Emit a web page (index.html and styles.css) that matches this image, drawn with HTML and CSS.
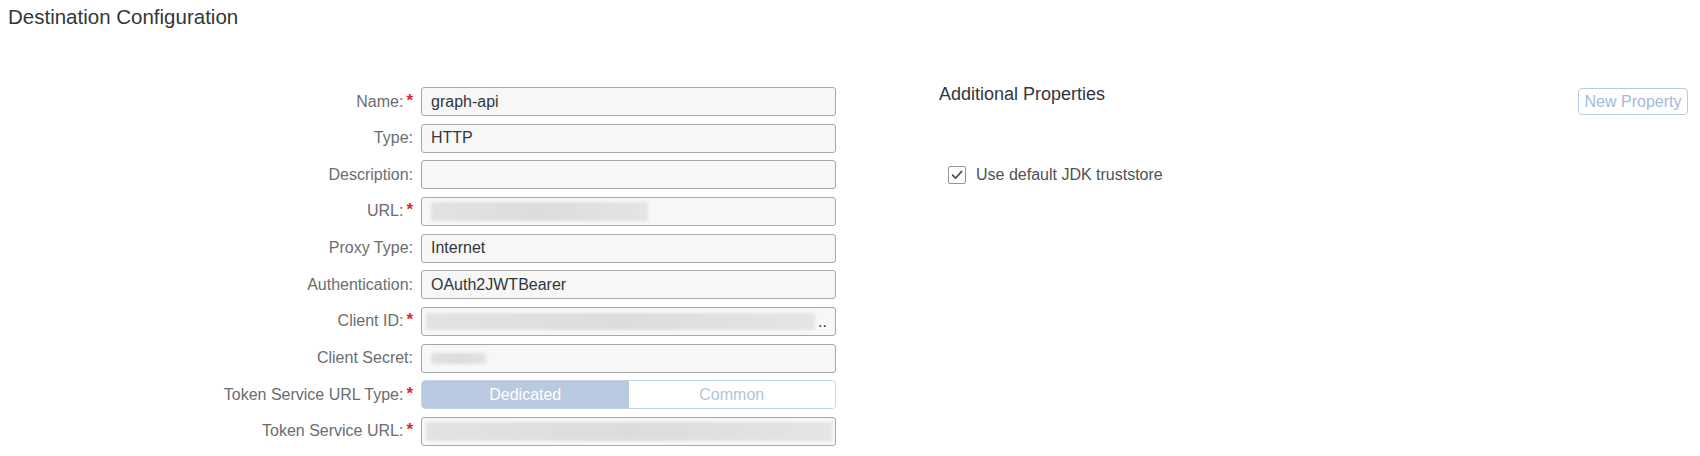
FILE: index.html
```html
<!DOCTYPE html>
<html>
<head>
<meta charset="utf-8">
<link rel="stylesheet" href="styles.css">
</head>
<body>
<div class="page">
  <h1 class="title">Destination Configuration</h1>
  <div class="content">
    <div class="form">
      <div class="label">Name:<span class="req">*</span></div>
      <div class="field"><span class="val">graph-api</span></div>

      <div class="label">Type:</div>
      <div class="field"><span class="val">HTTP</span></div>

      <div class="label">Description:</div>
      <div class="field"></div>

      <div class="label">URL:<span class="req">*</span></div>
      <div class="field"><span class="blur blur-url"></span></div>

      <div class="label">Proxy Type:</div>
      <div class="field"><span class="val">Internet</span></div>

      <div class="label">Authentication:</div>
      <div class="field"><span class="val">OAuth2JWTBearer</span></div>

      <div class="label">Client ID:<span class="req">*</span></div>
      <div class="field field-tight"><span class="blur blur-id"></span><span class="dots">..</span></div>

      <div class="label">Client Secret:</div>
      <div class="field"><span class="blur blur-secret"></span></div>

      <div class="label">Token Service URL Type:<span class="req">*</span></div>
      <div class="segmented">
        <div class="seg seg-on">Dedicated</div>
        <div class="seg seg-off">Common</div>
      </div>

      <div class="label">Token Service URL:<span class="req">*</span></div>
      <div class="field field-tight"><span class="blur blur-token"></span></div>
    </div>

    <div class="props">
      <div class="props-head">
        <h2 class="props-title">Additional Properties</h2>
        <button class="btn" type="button">New Property</button>
      </div>
      <div class="check-row">
        <span class="checkbox">
          <svg width="14" height="14" viewBox="0 0 14 14"><path d="M2.6 7.2 L5.6 10.2 L11.6 3.4" fill="none" stroke="#4a4d50" stroke-width="1.7" stroke-linecap="round" stroke-linejoin="round"/></svg>
        </span>
        <span class="check-text">Use default JDK truststore</span>
      </div>
    </div>
  </div>
</div>
</body>
</html>
```

FILE: styles.css
```css
html, body {
  margin: 0;
  padding: 0;
  background: #ffffff;
}

body {
  font-family: "Liberation Sans", Arial, sans-serif;
  color: #32363a;
}

.page {
  padding: 0 12px 0 8px;
}

.title {
  margin: 5px 0 0 0;
  font-size: 20.5px;
  line-height: 24px;
  font-weight: normal;
  color: #32363a;
}

.content {
  display: flex;
  margin-top: 54px;
}

.form {
  margin-top: 4px;
  display: grid;
  grid-template-columns: 405px 415px;
  column-gap: 8px;
  row-gap: 7.67px;
  grid-auto-rows: 29px;
}

.label {
  display: flex;
  align-items: center;
  justify-content: flex-end;
  font-size: 16px;
  color: #6a6d70;
  white-space: nowrap;
}

.req {
  color: #e0262f;
  font-weight: bold;
  font-size: 17px;
  margin-left: 3px;
  position: relative;
  top: -1px;
}

.field {
  box-sizing: border-box;
  height: 29px;
  border: 1px solid #a3a9af;
  border-radius: 3px;
  background: #f7f7f7;
  display: flex;
  align-items: center;
  padding-left: 9px;
  position: relative;
  overflow: hidden;
}

.field-tight {
  padding-left: 4px;
}

.val {
  font-size: 16px;
  color: #32363a;
}

.blur {
  display: block;
  border-radius: 3px;
  filter: blur(1.5px);
  background: linear-gradient(90deg, #e2e2e2, #dcdcdc 50%, #e4e4e4);
}

.blur-url {
  width: 217px;
  height: 19px;
}

.blur-id {
  width: 389px;
  height: 17px;
}

.blur-secret {
  width: 55px;
  height: 11px;
}

.blur-token {
  width: 406px;
  height: 19px;
}

.dots {
  font-size: 16px;
  color: #32363a;
  margin-left: 3px;
  line-height: 1;
  align-self: center;
  padding-top: 2px;
}

.segmented {
  box-sizing: border-box;
  height: 29px;
  display: flex;
  border: 1px solid #c3d3e8;
  border-radius: 4px;
  overflow: hidden;
}

.seg {
  flex: 1;
  display: flex;
  align-items: center;
  justify-content: center;
  font-size: 16px;
}

.seg-on {
  background: #b8c9e0;
  color: #ffffff;
}

.seg-off {
  background: #ffffff;
  color: #b3c4dc;
}

.props {
  flex: 1;
  margin-left: 103px;
}

.props-head {
  display: flex;
  justify-content: space-between;
  align-items: flex-start;
}

.props-title {
  margin: 0;
  font-size: 18px;
  line-height: 22px;
  font-weight: normal;
  color: #32363a;
}

.btn {
  margin-top: 5px;
  box-sizing: border-box;
  height: 27px;
  width: 110px;
  padding: 0;
  border: 1px solid #b6cbe6;
  border-radius: 4px;
  background: #ffffff;
  color: #a3badb;
  font-family: "Liberation Sans", Arial, sans-serif;
  font-size: 16px;
}

.check-row {
  margin-top: 51px;
  padding-left: 9px;
  display: flex;
  align-items: center;
}

.checkbox {
  box-sizing: border-box;
  width: 18px;
  height: 18px;
  border: 1px solid #8f959b;
  border-radius: 2px;
  display: flex;
  align-items: center;
  justify-content: center;
  background: #fff;
}

.check-text {
  margin-left: 10px;
  font-size: 16px;
  color: #4f5256;
}
```
